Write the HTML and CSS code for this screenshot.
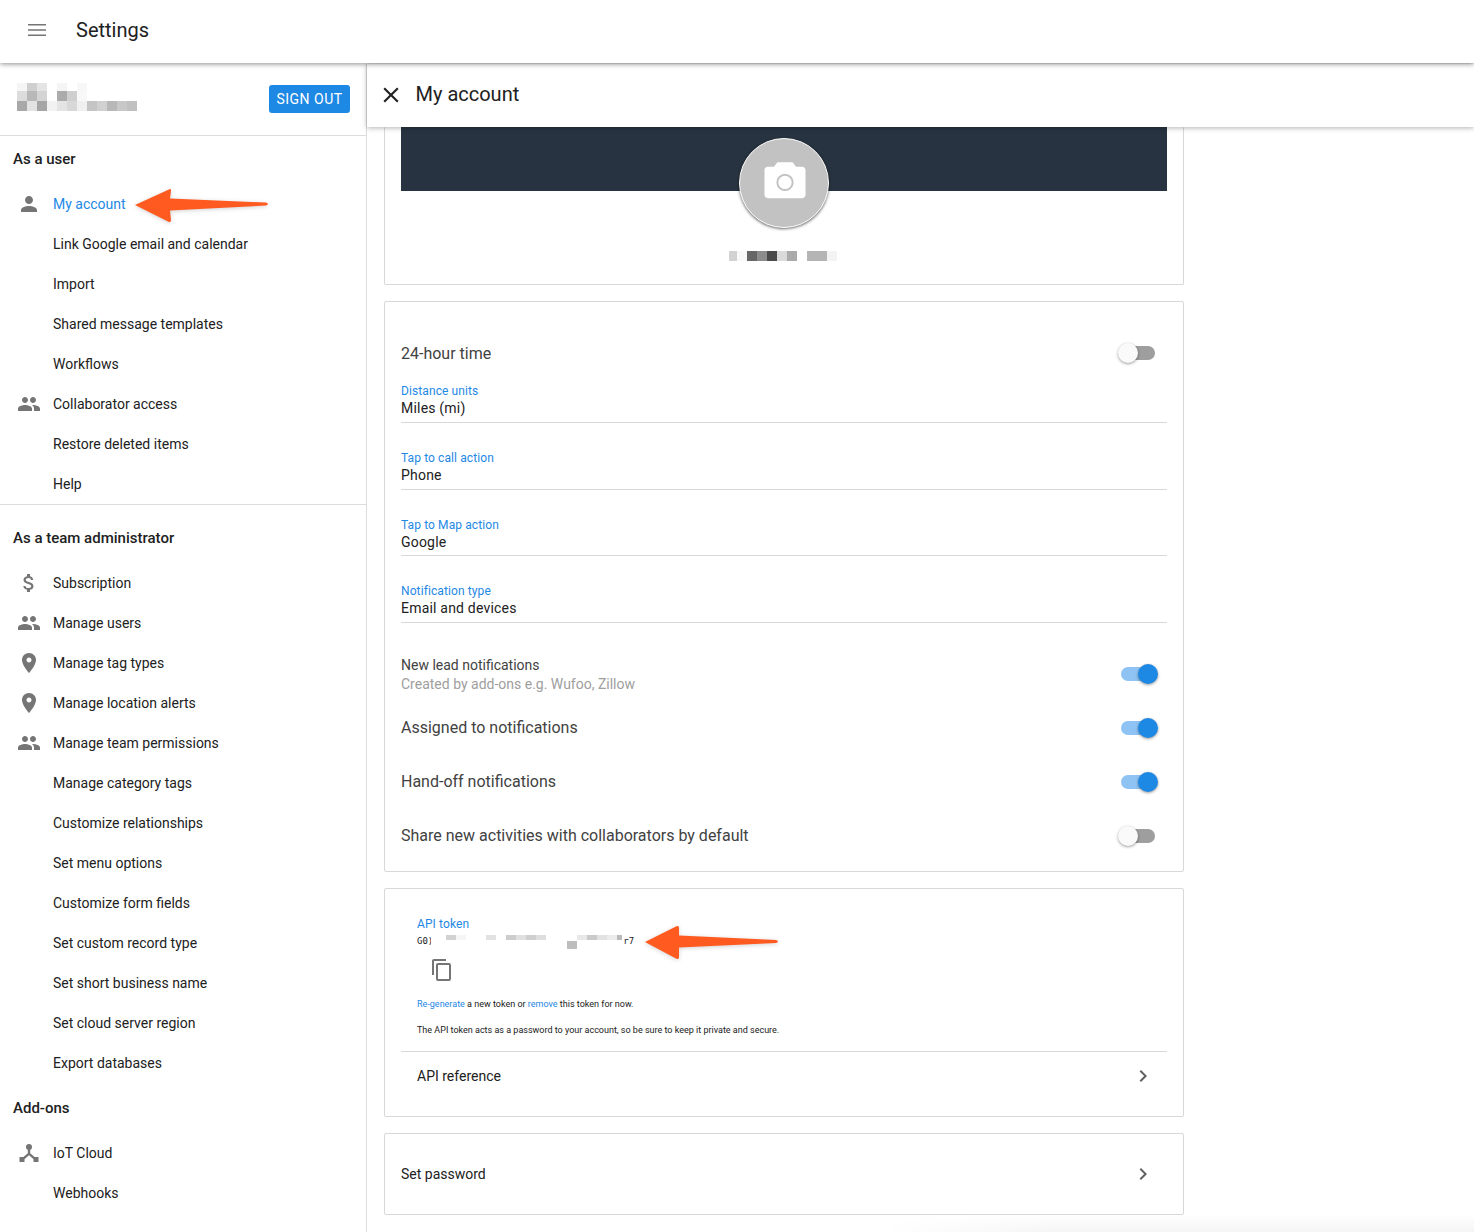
FILE: index.html
```html
<!DOCTYPE html>
<html lang="en">
<head>
<meta charset="utf-8">
<title>Settings</title>
<link rel="stylesheet" href="styles.css">
</head>
<body>
<header class="topbar">
  <svg class="menu-icon" viewBox="0 0 18 12"><path d="M0 0h18v1.5H0zM0 5.2h18v1.5H0zM0 10.5h18V12H0z"/></svg>
  <h1 class="topbar-title">Settings</h1>
</header>
<div class="layout">
  <aside class="sidebar">
    <div class="profile">
      <svg class="blur-name" viewBox="0 0 125 32" width="125" height="32">
        <rect x="5" y="0" width="10" height="8" fill="#f5f5f5"/><rect x="15" y="0" width="10" height="8" fill="#cfcfcf"/><rect x="25" y="0" width="10" height="8" fill="#e4e4e4"/><rect x="45" y="0" width="10" height="8" fill="#f5f5f5"/><rect x="65" y="0" width="10" height="8" fill="#f7f7f7"/>
        <rect x="5" y="8" width="10" height="10" fill="#dcdcdc"/><rect x="15" y="8" width="10" height="10" fill="#b8b8b8"/><rect x="25" y="8" width="10" height="10" fill="#d4d4d4"/><rect x="45" y="8" width="10" height="10" fill="#ababab"/><rect x="55" y="8" width="10" height="10" fill="#cfcfcf"/><rect x="65" y="8" width="10" height="10" fill="#f8f8f8"/>
        <rect x="5" y="18" width="10" height="10" fill="#a8a8a8"/><rect x="15" y="18" width="10" height="10" fill="#e2e2e2"/><rect x="25" y="18" width="10" height="10" fill="#a5a5a5"/><rect x="35" y="18" width="10" height="10" fill="#f2f2f2"/><rect x="45" y="18" width="10" height="10" fill="#e4e4e4"/><rect x="55" y="18" width="10" height="10" fill="#d8d8d8"/><rect x="65" y="18" width="10" height="10" fill="#f0f0f0"/><rect x="75" y="18" width="10" height="10" fill="#c4c4c4"/><rect x="85" y="18" width="10" height="10" fill="#d0d0d0"/><rect x="95" y="18" width="10" height="10" fill="#b8b8b8"/><rect x="105" y="18" width="10" height="10" fill="#c8c8c8"/><rect x="115" y="18" width="10" height="10" fill="#c0c0c0"/>
      </svg>
      <button class="signout">SIGN OUT</button>
    </div>
    <section class="nav-group nav-group-user">
      <h2 class="nav-heading">As a user</h2>
      <a class="nav-row nav-active"><svg class="nav-icon" viewBox="0 0 24 24"><path d="M12 12c2.21 0 4-1.79 4-4s-1.79-4-4-4-4 1.79-4 4 1.79 4 4 4zm0 2c-2.67 0-8 1.34-8 4v2h16v-2c0-2.66-5.33-4-8-4z"/></svg>My account</a>
      <a class="nav-row nav-plain">Link Google email and calendar</a>
      <a class="nav-row nav-plain">Import</a>
      <a class="nav-row nav-plain">Shared message templates</a>
      <a class="nav-row nav-plain">Workflows</a>
      <a class="nav-row"><svg class="nav-icon" viewBox="0 0 24 24"><path d="M16 11c1.66 0 2.99-1.34 2.99-3S17.66 5 16 5c-1.66 0-3 1.34-3 3s1.34 3 3 3zm-8 0c1.66 0 2.99-1.34 2.99-3S9.66 5 8 5C6.34 5 5 6.34 5 8s1.34 3 3 3zm0 2c-2.33 0-7 1.17-7 3.5V19h14v-2.5c0-2.33-4.67-3.5-7-3.5zm8 0c-.29 0-.62.02-.97.05 1.16.84 1.97 1.97 1.97 3.45V19h6v-2.5c0-2.33-4.67-3.5-7-3.5z"/></svg>Collaborator access</a>
      <a class="nav-row nav-plain">Restore deleted items</a>
      <a class="nav-row nav-plain">Help</a>
    </section>
    <section class="nav-group nav-group-admin">
      <h2 class="nav-heading">As a team administrator</h2>
      <a class="nav-row"><svg class="nav-icon" viewBox="0 0 24 24"><path d="M11.8 10.9c-2.27-.59-3-1.2-3-2.15 0-1.09 1.01-1.85 2.7-1.85 1.78 0 2.44.85 2.5 2.1h2.21c-.07-1.72-1.12-3.3-3.21-3.81V3h-3v2.16c-1.94.42-3.5 1.68-3.5 3.61 0 2.31 1.91 3.46 4.7 4.13 2.5.6 3 1.48 3 2.41 0 .69-.49 1.79-2.7 1.79-2.06 0-2.87-.92-2.98-2.1h-2.2c.12 2.19 1.76 3.42 3.68 3.83V21h3v-2.15c1.95-.37 3.5-1.5 3.5-3.55 0-2.84-2.43-3.81-4.7-4.4z"/></svg>Subscription</a>
      <a class="nav-row"><svg class="nav-icon" viewBox="0 0 24 24"><path d="M16 11c1.66 0 2.99-1.34 2.99-3S17.66 5 16 5c-1.66 0-3 1.34-3 3s1.34 3 3 3zm-8 0c1.66 0 2.99-1.34 2.99-3S9.66 5 8 5C6.34 5 5 6.34 5 8s1.34 3 3 3zm0 2c-2.33 0-7 1.17-7 3.5V19h14v-2.5c0-2.33-4.67-3.5-7-3.5zm8 0c-.29 0-.62.02-.97.05 1.16.84 1.97 1.97 1.97 3.45V19h6v-2.5c0-2.33-4.67-3.5-7-3.5z"/></svg>Manage users</a>
      <a class="nav-row"><svg class="nav-icon" viewBox="0 0 24 24"><path d="M12 2C8.13 2 5 5.13 5 9c0 5.25 7 13 7 13s7-7.75 7-13c0-3.87-3.13-7-7-7zm0 9.5c-1.38 0-2.5-1.12-2.5-2.5s1.12-2.5 2.5-2.5 2.5 1.12 2.5 2.5-1.12 2.5-2.5 2.5z"/></svg>Manage tag types</a>
      <a class="nav-row"><svg class="nav-icon" viewBox="0 0 24 24"><path d="M12 2C8.13 2 5 5.13 5 9c0 5.25 7 13 7 13s7-7.75 7-13c0-3.87-3.13-7-7-7zm0 9.5c-1.38 0-2.5-1.12-2.5-2.5s1.12-2.5 2.5-2.5 2.5 1.12 2.5 2.5-1.12 2.5-2.5 2.5z"/></svg>Manage location alerts</a>
      <a class="nav-row"><svg class="nav-icon" viewBox="0 0 24 24"><path d="M16 11c1.66 0 2.99-1.34 2.99-3S17.66 5 16 5c-1.66 0-3 1.34-3 3s1.34 3 3 3zm-8 0c1.66 0 2.99-1.34 2.99-3S9.66 5 8 5C6.34 5 5 6.34 5 8s1.34 3 3 3zm0 2c-2.33 0-7 1.17-7 3.5V19h14v-2.5c0-2.33-4.67-3.5-7-3.5zm8 0c-.29 0-.62.02-.97.05 1.16.84 1.97 1.97 1.97 3.45V19h6v-2.5c0-2.33-4.67-3.5-7-3.5z"/></svg>Manage team permissions</a>
      <a class="nav-row nav-plain">Manage category tags</a>
      <a class="nav-row nav-plain">Customize relationships</a>
      <a class="nav-row nav-plain">Set menu options</a>
      <a class="nav-row nav-plain">Customize form fields</a>
      <a class="nav-row nav-plain">Set custom record type</a>
      <a class="nav-row nav-plain">Set short business name</a>
      <a class="nav-row nav-plain">Set cloud server region</a>
      <a class="nav-row nav-plain">Export databases</a>
    </section>
    <section class="nav-group nav-group-addons">
      <h2 class="nav-heading">Add-ons</h2>
      <a class="nav-row"><svg class="nav-icon" viewBox="0 0 24 24"><circle cx="12" cy="6" r="3"/><path d="M10.8 8h2.4v4.2l5 4.2-1.600 1.800-4.600-3.900-4.600 3.900-1.600-1.800 5-4.200z"/><rect x="2.500" y="16" width="5" height="5"/><rect x="16.500" y="16" width="5" height="5"/></svg>IoT Cloud</a>
      <a class="nav-row nav-plain">Webhooks</a>
    </section>
  </aside>
  <main class="panel">
    <div class="panel-bar">
      <svg class="close-icon" viewBox="0 0 24 24"><path d="M19 6.41L17.59 5 12 10.59 6.41 5 5 6.41 10.59 12 5 17.59 6.41 19 12 13.41 17.59 19 19 17.59 13.41 12z"/></svg>
      <h2 class="panel-title">My account</h2>
    </div>
    <div class="panel-body">
      <section class="card card-profile">
        <div class="cover"></div>
        <div class="avatar">
          <svg class="camera" viewBox="0 0 44 38"><path d="M14 0h16l3.500 4.500H40c2 0 3.500 1.500 3.500 3.500v26c0 2-1.500 3.500-3.500 3.500H4C2 37.500 .5 36 .5 34V8C.5 6 2 4.500 4 4.500h6.500z" fill="#fff"/><circle cx="22" cy="21" r="8" fill="none" stroke="#c2c2c2" stroke-width="2"/></svg>
        </div>
        <svg class="blur-user" viewBox="0 0 108 10" width="108" height="10">
          <rect x="0" y="0" width="8" height="10" fill="#d2d2d2"/><rect x="8" y="0" width="10" height="10" fill="#f8f8f8"/><rect x="18" y="0" width="10" height="10" fill="#666"/><rect x="28" y="0" width="10" height="10" fill="#8c8c8c"/><rect x="38" y="0" width="10" height="10" fill="#4a4a4a"/><rect x="48" y="0" width="10" height="10" fill="#dadada"/><rect x="58" y="0" width="10" height="10" fill="#aaa"/><rect x="78" y="0" width="20" height="10" fill="#b4b4b4"/><rect x="98" y="0" width="10" height="10" fill="#f3f3f3"/>
        </svg>
      </section>
      <section class="card card-prefs">
        <div class="toggle-row toggle-first"><span class="row-large">24-hour time</span><span class="switch"></span></div>
        <div class="field"><label class="field-label">Distance units</label><div class="field-value">Miles (mi)</div></div>
        <div class="field"><label class="field-label">Tap to call action</label><div class="field-value">Phone</div></div>
        <div class="field"><label class="field-label">Tap to Map action</label><div class="field-value">Google</div></div>
        <div class="field"><label class="field-label">Notification type</label><div class="field-value">Email and devices</div></div>
        <div class="toggle-row toggle-lead"><span class="row-stack"><span class="row-main">New lead notifications</span><span class="row-sub">Created by add-ons e.g. Wufoo, Zillow</span></span><span class="switch switch-on"></span></div>
        <div class="toggle-row"><span class="row-large">Assigned to notifications</span><span class="switch switch-on"></span></div>
        <div class="toggle-row"><span class="row-large">Hand-off notifications</span><span class="switch switch-on"></span></div>
        <div class="toggle-row"><span class="row-large">Share new activities with collaborators by default</span><span class="switch"></span></div>
      </section>
      <section class="card card-api">
        <div class="api-inner">
          <div class="field-label">API token</div>
          <div class="token"><span>G0)</span><svg class="blur-token" viewBox="-1 0 191 14" width="191" height="14"><rect x="14" y="0" width="10" height="5" fill="#d2d2d2"/><rect x="24" y="0" width="10" height="5" fill="#f6f6f6"/><rect x="54" y="0" width="10" height="5" fill="#e2e2e2"/><rect x="74" y="0" width="10" height="5" fill="#cdcdcd"/><rect x="84" y="0" width="10" height="5" fill="#e0e0e0"/><rect x="94" y="0" width="10" height="5" fill="#cfcfcf"/><rect x="104" y="0" width="10" height="5" fill="#dedede"/><rect x="135" y="6" width="10" height="8" fill="#bdbdbd"/><rect x="145" y="0" width="10" height="5" fill="#e8e8e8"/><rect x="155" y="0" width="10" height="5" fill="#cacaca"/><rect x="165" y="0" width="10" height="5" fill="#e2e2e2"/><rect x="175" y="0" width="10" height="5" fill="#ececec"/><rect x="185" y="0" width="5" height="5" fill="#bbb"/></svg><span>r7</span></div>
          <svg class="copy-icon" viewBox="0 0 24 24"><path d="M16 1H4c-1.100 0-2 .9-2 2v14h2V3h12V1zm3 4H8c-1.100 0-2 .9-2 2v14c0 1.100.9 2 2 2h11c1.100 0 2-.9 2-2V7c0-1.100-.9-2-2-2zm0 16H8V7h11v14z"/></svg>
          <p class="api-note"><a class="link">Re-generate</a> a new token or <a class="link">remove</a> this token for now.</p>
          <p class="api-note api-note-second">The API token acts as a password to your account, so be sure to keep it private and secure.</p>
        </div>
        <div class="link-row link-row-api"><span>API reference</span><svg class="chevron" viewBox="0 0 24 24"><path d="M10 6L8.590 7.410 13.170 12l-4.580 4.590L10 18l6-6z"/></svg></div>
      </section>
      <section class="card card-password">
        <div class="link-row"><span>Set password</span><svg class="chevron" viewBox="0 0 24 24"><path d="M10 6L8.590 7.410 13.170 12l-4.580 4.590L10 18l6-6z"/></svg></div>
      </section>
    </div>
  </main>
</div>
<div class="bottom-fade"></div>
<svg class="arrow arrow-account" viewBox="0 0 136 36"><path d="M0 17 L35 1 Q36 0.500 36 3 L35 10.500 L131 14.500 Q135 16 131 17.500 L35 22.500 L36 32 Q36 35 33 33.500 Z"/></svg>
<svg class="arrow arrow-token" viewBox="0 0 136 36"><path d="M0 17 L32 1 Q34 0.500 34 3 L34 10.500 L131 15 Q135 16.500 131 18 L34 22.500 L34 32 Q34 35 31 33.500 Z"/></svg>
</body>
</html>
```

FILE: styles.css
```css
* { box-sizing: border-box; }
html, body { margin: 0; height: 1232px; overflow: hidden; background: #fff; }
body { font-family: Roboto, "Liberation Sans", sans-serif; color: #212121; position: relative; }
h1, h2, p { margin: 0; font-weight: 400; }

.topbar { height: 63px; display: flex; align-items: center; padding: 0 0 3px 28px; background: #fff; box-shadow: 0 1px 5px rgba(0,0,0,.45); position: relative; z-index: 3; }
.menu-icon { width: 18px; height: 12px; fill: #757575; margin-right: 30px; }
.topbar-title { font-size: 20px; line-height: 28px; }

.layout { display: flex; height: 1169px; padding-top: 1px; }
.sidebar { width: 367px; flex: none; border-right: 1px solid #dcdcdc; font-size: 14px; }
.profile { height: 72px; display: flex; align-items: flex-start; justify-content: space-between; padding: 18px 16px 0 12px; border-bottom: 1px solid #dcdcdc; }
.blur-name { margin-top: 1px; }
.signout { width: 81px; height: 28px; margin-top: 3px; border: 0; border-radius: 3px; background: #1e88e5; color: #fff; font: 400 14px/28px Roboto, sans-serif; letter-spacing: .5px; padding: 0; }

.nav-group { border-bottom: 1px solid #dcdcdc; }
.nav-group-admin, .nav-group-addons { border-bottom: 0; }
.nav-heading { font-size: 15px; font-weight: 500; line-height: 20px; padding-left: 13px; }
.nav-group-user .nav-heading { padding-top: 13px; padding-bottom: 15px; }
.nav-group-admin .nav-heading { padding-top: 23px; padding-bottom: 15px; }
.nav-group-addons .nav-heading { padding-top: 15px; padding-bottom: 15px; }
.nav-row { height: 40px; display: flex; align-items: center; padding-left: 17px; color: #212121; line-height: 20px; }
.nav-plain { padding-left: 53px; }
.nav-icon { width: 24px; height: 24px; fill: #757575; margin-right: 12px; flex: none; }
.nav-active { color: #1e88e5; }

.panel { flex: 1; position: relative; min-width: 0; }
.panel-bar { height: 63px; display: flex; align-items: center; padding: 0 0 2px 11px; background: #fff; box-shadow: 0 1px 5px rgba(0,0,0,.3); position: relative; z-index: 2; }
.close-icon { width: 26px; height: 26px; fill: #212121; margin-right: 11.500px; }
.panel-title { font-size: 20px; line-height: 28px; position: relative; top: -1px; }
.panel-body { padding-left: 17px; width: 817px; }

.card { border: 1px solid #d8d8d8; border-radius: 2px; width: 800px; margin-bottom: 16px; background: #fff; }
.card-profile { height: 158px; border-top: 0; position: relative; padding: 0 16px; }
.cover { height: 64px; background: #283341; }
.avatar { width: 90px; height: 90px; border-radius: 50%; background: #c2c2c2; border: 1px solid #fff; box-shadow: 0 1px 3px rgba(0,0,0,.6); position: absolute; left: 354px; top: 11px; display: flex; align-items: center; justify-content: center; }
.camera { width: 42px; height: 37px; margin-bottom: 6px; margin-left: 1px; }
.blur-user { position: absolute; left: 344px; top: 124px; display: block; }

.card-prefs { height: 571px; padding: 0 16px; }
.toggle-row { height: 54px; display: flex; align-items: center; justify-content: space-between; }
.toggle-first { margin-top: 24px; }
.toggle-first .row-large { padding-top: 2px; }
.row-large { font-size: 16px; line-height: 24px; color: #424242; }
.row-stack { display: flex; flex-direction: column; padding-top: 2px; }
.row-main { font-size: 14px; line-height: 19px; color: #424242; }
.row-sub { font-size: 14px; line-height: 19px; color: #9e9e9e; }
.toggle-lead { margin-top: 24px; }
.field { height: 66.500px; border-bottom: 1px solid #d8d8d8; padding-top: 27px; }
.toggle-first + .field { height: 43px; padding-top: 3px; }
.field-label { display: block; font-size: 12px; line-height: 16px; color: #1e88e5; letter-spacing: .1px; }
.field-value { font-size: 14px; line-height: 18px; color: #212121; letter-spacing: .2px; }
.switch { width: 34px; height: 14px; border-radius: 7px; background: #9e9e9e; position: relative; margin-right: 12px; flex: none; }
.switch::after { content: ""; width: 20px; height: 20px; border-radius: 50%; background: #fafafa; position: absolute; left: -3px; top: -3px; box-shadow: 0 1px 3px rgba(0,0,0,.4); }
.switch-on { background: #8fc3f3; }
.switch-on::after { background: #1e88e5; left: 17px; }

.card-api { height: 229px; padding: 0 16px; }
.api-inner { padding: 27px 16px 0; height: 162px; }
.token { font: 9px/12px "DejaVu Sans Mono", monospace; display: flex; align-items: flex-start; color: #212121; height: 14px; margin-top: 3px; }
.token span { flex: none; }
.blur-token { margin-left: -2px; margin-right: 1px; flex: none; background: #fff; }
.copy-icon { width: 24px; height: 24px; fill: #757575; display: block; margin: 9px 0 0 13px; }
.api-note { font-size: 9px; line-height: 12px; margin-top: 16px; color: #212121; }
.api-note-second { margin-top: 14px; }
.link { color: #1e88e5; }
.link-row { height: 80px; display: flex; align-items: center; justify-content: space-between; font-size: 14px; padding-right: 12px; }
.link-row-api { height: 49px; border-top: 1px solid #d8d8d8; padding-left: 16px; }
.chevron { width: 24px; height: 24px; fill: #616161; }
.card-password { height: 82px; padding: 0 16px; }

.bottom-fade { position: absolute; left: 880px; right: 0; bottom: 0; height: 18px; background: linear-gradient(to bottom, rgba(0,0,0,0), rgba(0,0,0,.04)); -webkit-mask-image: linear-gradient(to right, transparent, #000 30%); mask-image: linear-gradient(to right, transparent, #000 30%); }
.arrow { position: absolute; fill: #ff5a1f; width: 136px; height: 36px; z-index: 5; filter: drop-shadow(0 1px 2px rgba(0,0,0,.18)); }
.arrow-account { left: 135px; top: 188px; }
.arrow-token { left: 645px; top: 925px; }
```
